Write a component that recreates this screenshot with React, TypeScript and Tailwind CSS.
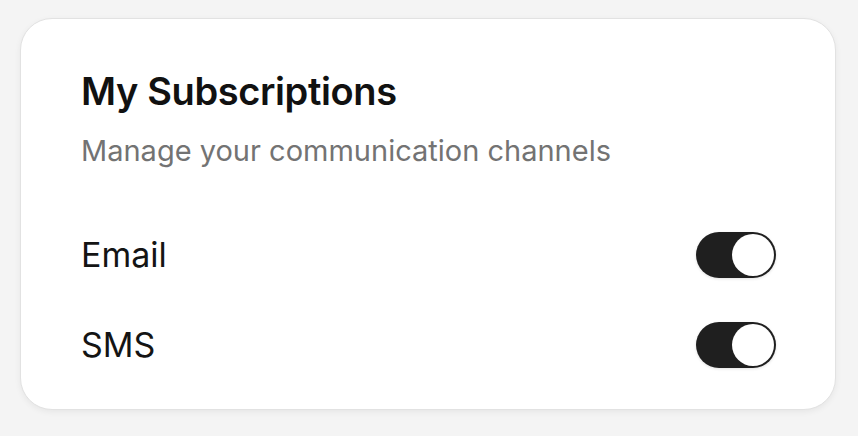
import React, { useState } from 'react';

const Toggle = ({ on, onChange }: { on: boolean; onChange: () => void }) => (
    <button
        onClick={onChange}
        className={`relative flex h-[46px] w-[80px] items-center rounded-full p-[2px] shadow-[0_1px_3px_rgba(0,0,0,0.12)] ${on ? 'bg-[#1f1f1f] justify-end' : 'bg-[#d4d4d4] justify-start'}`}
    >
        <span className="block h-[42px] w-[42px] rounded-full bg-white" />
    </button>
);

export default function App() {
    const [email, setEmail] = useState(true);
    const [sms, setSms] = useState(true);

    return (
        <div className="min-h-screen bg-[#f4f4f4] pl-[20px] pr-[22px] pt-[18px] font-['Inter',sans-serif]">
            <div className="h-[392px] rounded-[32px] border border-[#e2e2e2] bg-white pl-[60px] pr-[59px] pt-[49px] shadow-[0_2px_6px_rgba(0,0,0,0.06)]">
                <h1 className="text-[38px] font-semibold leading-[46px] tracking-[-0.01em] text-[#111]">My Subscriptions</h1>
                <p className="mt-[19px] text-[29px] leading-[36px] text-[#737373]">Manage your communication channels</p>
                <div className="mt-[63px] flex flex-col gap-[44px]">
                    <div className="flex items-center justify-between">
                        <span className="text-[34px] leading-[46px] text-[#141414]">Email</span>
                        <Toggle on={email} onChange={() => setEmail(!email)} />
                    </div>
                    <div className="flex items-center justify-between">
                        <span className="text-[34px] leading-[46px] text-[#141414]">SMS</span>
                        <Toggle on={sms} onChange={() => setSms(!sms)} />
                    </div>
                </div>
            </div>
        </div>
    );
}
